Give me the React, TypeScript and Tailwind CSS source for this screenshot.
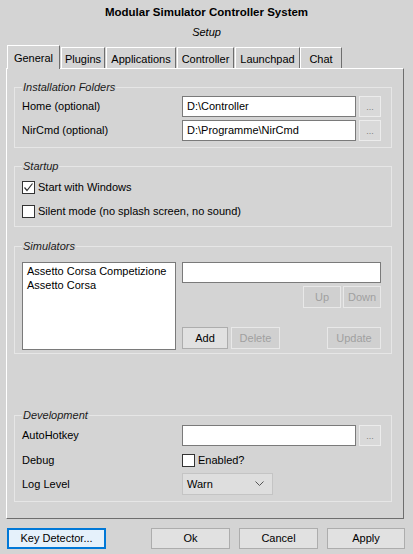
import React from "react";

const font = { fontFamily: '"Liberation Sans", Arial, sans-serif' };

function Tab({ label, width, active }: { label: string; width: string; active?: boolean }) {
  if (active) {
    return (
      <div
        className={`${width} relative z-10 -mb-px flex h-[24px] items-start justify-center border-l border-t border-r border-l-white border-t-white border-r-[#6e6e6e] bg-[#d4d4d4] pt-[4px]`}
      >
        {label}
      </div>
    );
  }
  return (
    <div
      className={`${width} flex h-[21px] items-start justify-center border-l border-t border-r border-l-white border-t-white border-r-[#6e6e6e] pt-[3px]`}
    >
      {label}
    </div>
  );
}

function GroupBox({ title, className, children }: { title: string; className?: string; children: React.ReactNode }) {
  return (
    <div className={`ml-[7px] flex w-[378px] flex-col border border-[#e6e6e6] pl-[7px] ${className ?? ""}`}>
      <div className="-mt-[8px] h-[14px] self-start bg-[#d4d4d4] px-[1px] leading-[14px] italic text-[#1a1a1a]">
        {title}
      </div>
      {children}
    </div>
  );
}

function TextBox({ value, className }: { value?: string; className?: string }) {
  return (
    <div className={`flex items-center border border-[#7a7a7a] bg-white pl-[4px] ${className ?? ""}`}>
      {value}
    </div>
  );
}

function DotsButton() {
  return (
    <div className="ml-[3px] flex h-[21px] w-[22px] items-end justify-center border border-[#ececec] bg-[#d9d9d9] pb-[4px] text-[9px] leading-[9px] text-[#808080]">
      ...
    </div>
  );
}

function DisabledButton({ label, className }: { label: string; className?: string }) {
  return (
    <div
      className={`flex h-[22px] items-center justify-center border border-[#e8e8e8] bg-[#d0d0d0] text-[#a0a0a0] ${className ?? ""}`}
    >
      {label}
    </div>
  );
}

function Button({ label, className }: { label: string; className?: string }) {
  return (
    <div className={`flex h-[22px] items-center justify-center border border-[#adadad] bg-[#e1e1e1] ${className ?? ""}`}>
      {label}
    </div>
  );
}

function CheckBox({ checked }: { checked?: boolean }) {
  return (
    <div className="flex h-[13px] w-[13px] items-center justify-center border border-[#333333] bg-white">
      {checked && (
        <svg width="11" height="11" viewBox="0 0 11 11">
          <polyline points="1.5,5.5 4,8.5 9.5,1.5" fill="none" stroke="#333" strokeWidth="1.2" />
        </svg>
      )}
    </div>
  );
}

export default function App() {
  return (
    <div className="flex h-[554px] w-[413px] flex-col bg-[#d4d4d4] text-[11px] text-black" style={font}>
      <div className="pt-[5px] text-center text-[11.5px] font-bold leading-[14px]">Modular Simulator Controller System</div>
      <div className="mt-[6px] text-center italic leading-[14px]">Setup</div>

      <div className="ml-[7px] mt-[6px] flex h-[23px] items-end">
        <Tab label="General" width="w-[53px]" active />
        <div className="ml-[1px]" />
        <Tab label="Plugins" width="w-[44px]" />
        <div className="ml-[1px]" />
        <Tab label="Applications" width="w-[70px]" />
        <div className="ml-[1px]" />
        <Tab label="Controller" width="w-[57px]" />
        <div className="ml-[1px]" />
        <Tab label="Launchpad" width="w-[65px]" />
        <div className="ml-[0px]" />
        <Tab label="Chat" width="w-[42px]" />
      </div>

      <div className="ml-[6px] flex h-[451px] w-[398px] flex-col border border-l-white border-t-white border-r-[#6e6e6e] border-b-[#6e6e6e] pt-[18px]">
        <GroupBox title="Installation Folders" className="pb-[6px]">
          <div className="mt-[2px] flex h-[21px] items-center">
            <div className="w-[160px]">Home (optional)</div>
            <TextBox value="D:\Controller" className="h-[21px] w-[174px]" />
            <DotsButton />
          </div>
          <div className="mt-[3px] flex h-[21px] items-center">
            <div className="w-[160px]">NirCmd (optional)</div>
            <TextBox value="D:\Programme\NirCmd" className="h-[21px] w-[174px]" />
            <DotsButton />
          </div>
        </GroupBox>

        <GroupBox title="Startup" className="mt-[18px] pb-[5px]">
          <div className="mt-[4px] flex h-[20px] items-center gap-[3px]">
            <CheckBox checked />
            <span>Start with Windows</span>
          </div>
          <div className="mt-[4px] flex h-[20px] items-center gap-[3px]">
            <CheckBox />
            <span>Silent mode (no splash screen, no sound)</span>
          </div>
        </GroupBox>

        <GroupBox title="Simulators" className="mt-[19px] pb-[3px]">
          <div className="mt-[9px] flex">
            <div className="h-[88px] w-[154px] border border-[#7a7a7a] bg-white pl-[4px] pt-[1px] leading-[14px]">
              <div>Assetto Corsa Competizione</div>
              <div>Assetto Corsa</div>
            </div>
            <div className="ml-[6px] flex w-[199px] flex-col">
              <TextBox className="h-[21px] w-[199px]" />
              <div className="mt-[3px] flex justify-end gap-[2px]">
                <DisabledButton label="Up" className="w-[38px]" />
                <DisabledButton label="Down" className="w-[38px]" />
              </div>
              <div className="mt-[19px] flex">
                <Button label="Add" className="w-[46px]" />
                <DisabledButton label="Delete" className="ml-[3px] w-[49px]" />
                <DisabledButton label="Update" className="ml-auto w-[54px]" />
              </div>
            </div>
          </div>
        </GroupBox>

        <GroupBox title="Development" className="mt-[61px] pb-[6px]">
          <div className="mt-[3px] flex h-[21px] items-center">
            <div className="w-[160px]">AutoHotkey</div>
            <TextBox className="h-[21px] w-[174px]" />
            <DotsButton />
          </div>
          <div className="mt-[4px] flex h-[20px] items-center">
            <div className="w-[160px]">Debug</div>
            <CheckBox />
            <span className="ml-[3px]">Enabled?</span>
          </div>
          <div className="mt-[3px] flex h-[22px] items-center">
            <div className="w-[160px]">Log Level</div>
            <div className="flex h-[22px] w-[91px] items-center justify-between border border-[#c4c4c4] bg-[#dedede] pl-[4px] pr-[8px]">
              <span>Warn</span>
              <svg width="9" height="6" viewBox="0 0 9 6">
                <polyline points="0.5,0.5 4.5,4.5 8.5,0.5" fill="none" stroke="#555" strokeWidth="1" />
              </svg>
            </div>
          </div>
        </GroupBox>
      </div>

      <div className="mt-[9px] flex h-[21px] items-stretch">
        <div className="ml-[7px] flex w-[99px] items-center justify-center border-2 border-[#0078d7] bg-[#e5f1fb]">
          Key Detector...
        </div>
        <div className="ml-[45px] flex w-[79px] items-center justify-center border border-[#adadad] bg-[#e1e1e1]">Ok</div>
        <div className="ml-[9px] flex w-[79px] items-center justify-center border border-[#adadad] bg-[#e1e1e1]">Cancel</div>
        <div className="ml-[9px] flex w-[78px] items-center justify-center border border-[#adadad] bg-[#e1e1e1]">Apply</div>
      </div>
    </div>
  );
}
